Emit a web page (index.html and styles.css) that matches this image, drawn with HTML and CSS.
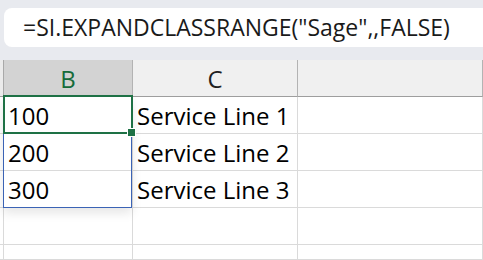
FILE: index.html
```html
<!DOCTYPE html>
<html lang="en">

<head>
    <meta charset="UTF-8">
    <meta name="viewport" content="width=device-width, initial-scale=1.0">
    <title>Spill range</title>
    <link rel="stylesheet" href="styles.css">
</head>

<body>
    <div class="formula-bar">
        <div class="formula-box">=SI.EXPANDCLASSRANGE("Sage",,FALSE)</div>
    </div>

    <div class="sheet">
        <div class="corner"></div>
        <div class="col-head selected">B</div>
        <div class="col-head">C</div>
        <div class="col-head"></div>

        <div class="row-edge"></div>
        <div class="cell">100</div>
        <div class="cell">Service Line 1</div>
        <div class="cell"></div>

        <div class="row-edge"></div>
        <div class="cell">200</div>
        <div class="cell">Service Line 2</div>
        <div class="cell"></div>

        <div class="row-edge"></div>
        <div class="cell">300</div>
        <div class="cell">Service Line 3</div>
        <div class="cell"></div>

        <div class="row-edge"></div>
        <div class="cell"></div>
        <div class="cell"></div>
        <div class="cell"></div>

        <div class="row-edge"></div>
        <div class="cell"></div>
        <div class="cell"></div>
        <div class="cell"></div>

        <!-- spill range and active cell sit over the grid -->
        <div class="spill"></div>
        <div class="active"><span class="handle"></span></div>
    </div>
</body>

</html>
```

FILE: styles.css
```css
body {
    margin: 0;
    width: 483px;
    height: 260px;
    overflow: hidden;
    background-color: #fff;
    font-family: 'Open Sans', 'Noto Sans', sans-serif;
    color: #000;
}

.formula-bar {
    height: 60px;
    box-sizing: border-box;
    padding: 8px 0 0 4px;
    background-color: #e8eaef;
}

.formula-box {
    height: 39px;
    box-sizing: border-box;
    padding-left: 19px;
    background-color: #fff;
    border-radius: 8px 0 0 8px;
    font-size: 23px;
    line-height: 39px;
    color: #1a1a1a;
    white-space: nowrap;
}

.sheet {
    position: relative;
    display: grid;
    grid-template-columns: 4px 129px 165px 1fr;
    grid-template-rows: repeat(5, 37px) 15px;
}

.corner {
    background-color: #ebebeb;
    border-right: 1px solid #a9a9a9;
    border-bottom: 1px solid #9e9e9e;
}

.col-head {
    display: flex;
    align-items: center;
    justify-content: center;
    background-color: #f0f0f0;
    border-right: 1px solid #b3b3b3;
    border-bottom: 1px solid #9e9e9e;
    font-size: 24px;
    color: #1f1f1f;
}

.col-head.selected {
    background-color: #d3d3d3;
    color: #166b3a;
}

.row-edge {
    border-right: 1px solid #dadada;
    border-bottom: 1px solid #dadada;
}

.cell {
    display: flex;
    align-items: center;
    padding-left: 4px;
    border-right: 1px solid #dadada;
    border-bottom: 1px solid #dadada;
    font-size: 24px;
    white-space: nowrap;
}

.spill {
    position: absolute;
    left: 3px;
    top: 36px;
    width: 129px;
    height: 112px;
    box-sizing: border-box;
    border: 1px solid #3b63b5;
    box-shadow: 0 5px 10px rgba(0, 0, 0, 0.1);
}

.active {
    position: absolute;
    left: 3px;
    top: 35px;
    width: 130px;
    height: 39px;
    box-sizing: border-box;
    border: 2px solid #1e7145;
}

.handle {
    position: absolute;
    right: -5px;
    bottom: -5px;
    width: 7px;
    height: 7px;
    background-color: #1e7145;
    border: 1px solid #fff;
}
```
